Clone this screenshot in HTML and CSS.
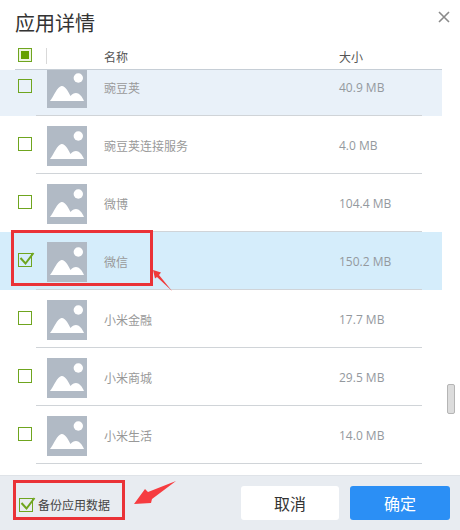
FILE: index.html
```html
<!DOCTYPE html>
<html lang="zh">
<head>
<meta charset="utf-8">
<title>应用详情</title>
<link rel="stylesheet" href="styles.css">
</head>
<body>
<svg class="defs" width="0" height="0">
  <symbol id="pic" viewBox="0 0 40 40">
    <rect width="40" height="40" fill="#b1bac5"/>
    <circle cx="31.300" cy="10" r="4.700" fill="#fff"/>
    <path d="M3 33C7 28 10 19 14.500 18C18 17.500 21 23 23.500 28C25 26 27 25 29 25C32 25 35 28 37 33Z" fill="#fff"/>
  </symbol>
  <symbol id="tick" viewBox="0 0 16 16">
    <path d="M1.500 6L6.500 11.500L14.500 1" fill="none" stroke="#6fa51f" stroke-width="2"/>
  </symbol>
</svg>
<main class="dialog">
  <header class="title-bar">
    <h1 class="title">应用详情</h1>
    <svg class="close" width="12" height="12" viewBox="0 0 12 12"><path d="M1 1L11 11M11 1L1 11" stroke="#8a8a8a" stroke-width="1.600" fill="none"/></svg>
  </header>
  <div class="col-head">
    <span class="box box-partial"></span>
    <span class="col-sep"></span>
    <span class="col-name">名称</span>
    <span class="col-size">大小</span>
  </div>
  <div class="list">
    <div class="rows">
      <div class="row row-hover"><span class="box"></span><svg class="pic"><use href="#pic"/></svg><span class="name">豌豆荚</span><span class="size">40.9 MB</span></div>
      <div class="row"><span class="box"></span><svg class="pic"><use href="#pic"/></svg><span class="name">豌豆荚连接服务</span><span class="size">4.0 MB</span></div>
      <div class="row"><span class="box"></span><svg class="pic"><use href="#pic"/></svg><span class="name">微博</span><span class="size">104.4 MB</span></div>
      <div class="row row-selected"><span class="box"><svg class="tick"><use href="#tick"/></svg></span><svg class="pic"><use href="#pic"/></svg><span class="name">微信</span><span class="size">150.2 MB</span></div>
      <div class="row"><span class="box"></span><svg class="pic"><use href="#pic"/></svg><span class="name">小米金融</span><span class="size">17.7 MB</span></div>
      <div class="row"><span class="box"></span><svg class="pic"><use href="#pic"/></svg><span class="name">小米商城</span><span class="size">29.5 MB</span></div>
      <div class="row"><span class="box"></span><svg class="pic"><use href="#pic"/></svg><span class="name">小米生活</span><span class="size">14.0 MB</span></div>
    </div>
    <div class="scroll-thumb"></div>
  </div>
  <footer class="footer">
    <label class="backup"><span class="box"><svg class="tick"><use href="#tick"/></svg></span>备份应用数据</label>
    <div class="actions">
      <button class="btn btn-cancel">取消</button>
      <button class="btn btn-ok">确定</button>
    </div>
  </footer>
</main>
<div class="mark mark-row"></div>
<div class="mark mark-backup"></div>
<svg class="arrow arrow-row" width="24" height="24" viewBox="0 0 24 24"><path d="M1 0L9 2.500L7 5L20 21L5 7L3 8.500Z" fill="#ef3b3b"/></svg>
<svg class="arrow arrow-backup" width="42" height="24" viewBox="0 0 42 24"><path d="M0 23L11 8L14 11L42 0L18 18L17 22Z" fill="#f63c40"/></svg>
</body>
</html>
```
FILE: styles.css
```css
* { box-sizing: border-box; }
html, body { margin: 0; height: 530px; overflow: hidden; }
body { position: relative; background: #fff; font-family: "Open Sans", "Noto Sans CJK SC", sans-serif; color: #999; }
.defs { position: absolute; }
.dialog { width: 460px; height: 530px; display: flex; flex-direction: column; }
.title-bar { height: 45px; padding: 9px 10px 0 15px; display: flex; justify-content: space-between; align-items: flex-start; }
.title { margin: 0; font: 400 20px/28px "Noto Sans CJK SC", sans-serif; color: #333; }
.close { margin-top: 2px; }
.col-head { height: 25px; width: 427px; margin-left: 15px; display: flex; align-items: center; border-bottom: 1px solid #c6ced6; font: 400 12px/16px "Noto Sans CJK SC", sans-serif; color: #555; }
.col-head .box { margin-left: 3px; margin-top: -4px; }
.col-sep { width: 1px; height: 16px; background: #d9d9d9; margin: -3px 0 0 14px; }
.col-name { margin-left: 57px; }
.col-size { margin-left: 211px; }
.box { width: 14px; height: 14px; border: 1px solid #6fa51f; display: flex; align-items: center; justify-content: center; flex: none; background: #fff; position: relative; }
.row .box { background: transparent; margin-top: -2px; }
.box-partial { background: #eef5e2; }
.box-partial::after { content: ""; width: 8px; height: 8px; background: #64a000; }
.tick { position: absolute; left: 0; top: -2px; width: 16px; height: 16px; }
.list { flex: 1; overflow: hidden; position: relative; }
.rows { margin-top: -12px; }
.row { height: 58px; width: 442px; display: flex; align-items: center; position: relative; padding-left: 18px; font-size: 12px; }
.row::after { content: ""; position: absolute; left: 36px; width: 386px; bottom: 0; height: 1px; background: #d0d4d8; }
.row-hover { background: #e9f1f9; }
.row-selected { background: #d5edfb; }
.pic { width: 40px; height: 40px; margin: 10px 0 0 15px; flex: none; align-self: flex-start; }
.name { width: 235px; margin-left: 17px; font-family: "Noto Sans CJK SC", sans-serif; }
.size { color: #94999e; }
.scroll-thumb { position: absolute; left: 447px; top: 314px; width: 8px; height: 30px; background: #dcdcdc; border: 1px solid #b5b5b5; border-radius: 2px; }
.footer { height: 55px; background: #e8ecf1; border-top: 1px solid #dfe3e8; display: flex; align-items: center; justify-content: space-between; padding: 0 10px 0 19px; }
.backup { display: flex; align-items: center; gap: 5px; font: 400 12px/16px "Noto Sans CJK SC", sans-serif; color: #444; margin-top: 3px; }
.backup .box { background: transparent; }
.actions { display: flex; gap: 11px; margin-top: -1px; }
.btn { height: 34px; border: 0; border-radius: 3px; font: 400 16px/22px "Noto Sans CJK SC", sans-serif; padding: 0; }
.btn-cancel { width: 98px; background: #fff; color: #333; }
.btn-ok { width: 100px; background: #2b8ff5; color: #fff; }
.mark { position: absolute; border: 3px solid #ea3237; }
.mark-row { left: 11px; top: 230px; width: 142px; height: 56px; }
.mark-backup { left: 13px; top: 480px; width: 112px; height: 40px; }
.arrow { position: absolute; }
.arrow-row { left: 152px; top: 270px; }
.arrow-backup { left: 134px; top: 481px; }
```
